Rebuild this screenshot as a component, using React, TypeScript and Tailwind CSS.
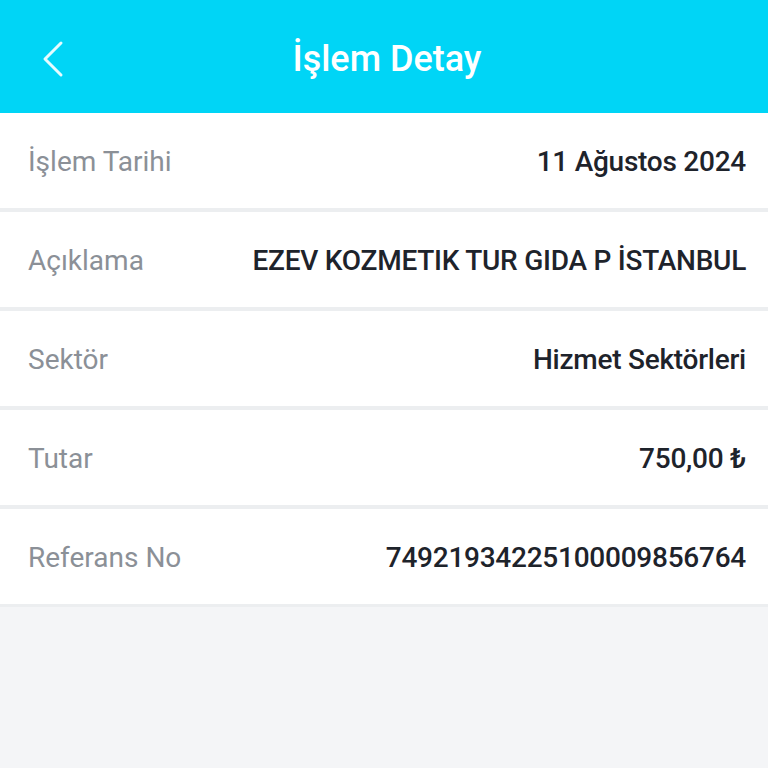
import React from "react";

const rows: [string, string][] = [
  ["İşlem Tarihi", "11 Ağustos 2024"],
  ["Açıklama", "EZEV KOZMETIK TUR GIDA P İSTANBUL"],
  ["Sektör", "Hizmet Sektörleri"],
  ["Tutar", "750,00 ₺"],
  ["Referans No", "74921934225100009856764"],
];

export default function App() {
  return (
    <div className="w-[768px] h-[768px] bg-[#f4f5f7] flex flex-col" style={{ fontFamily: "Roboto, 'Noto Sans', sans-serif" }}>
      <div className="h-[113px] bg-[#00d5f6] relative flex items-center justify-center shrink-0">
        <svg className="absolute left-[40px] top-[40px]" width="26" height="38" viewBox="0 0 26 38" fill="none">
          <path d="M21 3 L5 19 L21 35" stroke="#e6fbff" strokeWidth="3" strokeLinecap="round" strokeLinejoin="round" />
        </svg>
        <div className="text-white text-[36px] font-medium pt-[4px] pl-[6px]">İşlem Detay</div>
      </div>
      <div className="flex flex-col gap-[4px] bg-[#eceef0] pb-[3px]">
        {rows.map(([k, v]) => (
          <div key={k} className="h-[95px] bg-white flex items-center justify-between pl-[28px] pr-[22px] pt-[3px]">
            <span className="text-[28px] text-[#8b9097]">{k}</span>
            <span className="text-[28px] text-[#1e232b] font-medium tracking-[-0.25px]">{v}</span>
          </div>
        ))}
      </div>
    </div>
  );
}
